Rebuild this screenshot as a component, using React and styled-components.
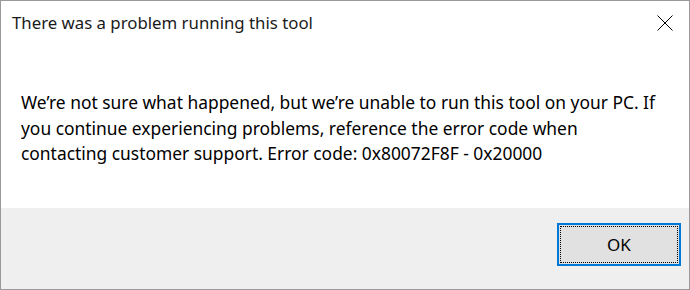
import React from "react";
import styled, { createGlobalStyle } from "styled-components";

const GlobalStyle = createGlobalStyle`
  * {
    margin: 0;
    padding: 0;
    box-sizing: border-box;
  }
  body {
    background: #ffffff;
    font-family: "Noto Sans", "Open Sans", sans-serif;
  }
`;

const Dialog = styled.div`
  width: 690px;
  height: 290px;
  border: 1px solid #999999;
  display: flex;
  flex-direction: column;
  background: #ffffff;
`;

const TitleBar = styled.div`
  height: 43px;
  display: flex;
  align-items: center;
  justify-content: space-between;
  padding-left: 11px;
  padding-right: 16px;
`;

const Title = styled.h1`
  font-size: 16.8px;
  font-weight: 400;
  color: #1a1a1a;
`;

const CloseButton = styled.button`
  width: 16px;
  height: 16px;
  border: none;
  background: transparent;
  display: flex;
  align-items: center;
  justify-content: center;
`;

const Content = styled.div`
  flex: 1;
  padding: 46px 20px 0 20px;
`;

const Message = styled.p`
  font-size: 17.4px;
  line-height: 25.5px;
  color: #000000;
  white-space: nowrap;
`;

const Footer = styled.div`
  height: 81px;
  background: #efefef;
  display: flex;
  justify-content: flex-end;
  align-items: flex-start;
  padding: 15px 8px 0 0;
`;

const OkButton = styled.button`
  width: 124px;
  height: 43px;
  border: 2px solid #0078d7;
  background: #e1e1e1;
  font-family: "Noto Sans", "Open Sans", sans-serif;
  font-size: 17px;
  color: #000000;
  padding: 1px;
`;

const FocusRing = styled.span`
  display: flex;
  align-items: center;
  justify-content: center;
  width: 100%;
  height: 100%;
  border: 1px dotted #000000;
`;

export default function App() {
  return (
    <Dialog>
      <GlobalStyle />
      <TitleBar>
        <Title>There was a problem running this tool</Title>
        <CloseButton aria-label="Close">
          <svg width="16" height="16" viewBox="0 0 16 16">
            <path d="M0.5 0.5 L15.5 15.5 M15.5 0.5 L0.5 15.5" stroke="#000" strokeWidth="1" />
          </svg>
        </CloseButton>
      </TitleBar>
      <Content>
        <Message>
          We’re not sure what happened, but we’re unable to run this tool on your PC. If
          <br />
          you continue experiencing problems, reference the error code when
          <br />
          contacting customer support. Error code: 0x80072F8F - 0x20000
        </Message>
      </Content>
      <Footer>
        <OkButton>
          <FocusRing>OK</FocusRing>
        </OkButton>
      </Footer>
    </Dialog>
  );
}
